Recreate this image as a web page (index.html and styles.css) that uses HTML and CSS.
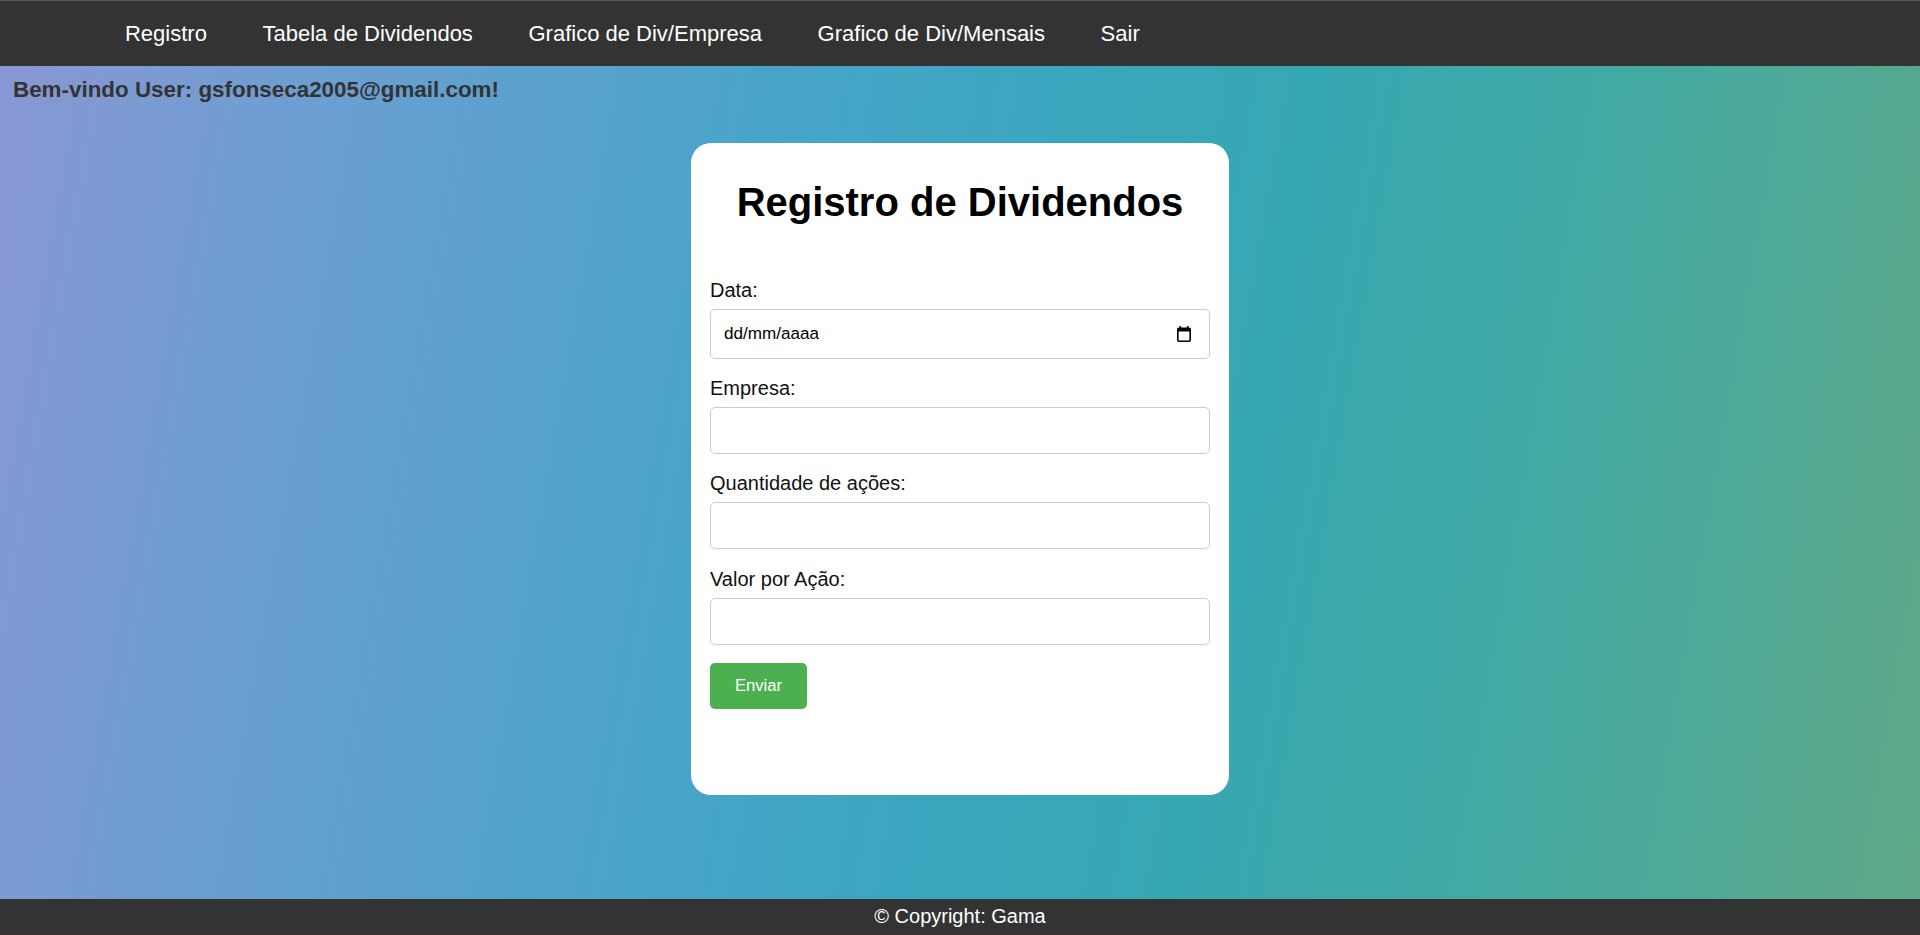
FILE: index.html
```html
<!DOCTYPE html>
<html lang="pt">
<head>
<meta charset="utf-8">
<title>Registro de Dividendos</title>
<link rel="stylesheet" href="styles.css">
</head>
<body>
<nav class="topnav">
  <a href="#" class="nav-link">Registro</a>
  <a href="#" class="nav-link">Tabela de Dividendos</a>
  <a href="#" class="nav-link">Grafico de Div/Empresa</a>
  <a href="#" class="nav-link">Grafico de Div/Mensais</a>
  <a href="#" class="nav-link">Sair</a>
</nav>
<main class="main">
  <p class="welcome">Bem-vindo User: gsfonseca2005@gmail.com!</p>
  <section class="card">
    <h1 class="card-title">Registro de Dividendos</h1>
    <form class="form">
      <div class="field">
        <label class="label">Data:</label>
        <div class="date-box">
          <input class="date-text" type="text" placeholder="dd/mm/aaaa">
          <svg class="cal-icon" width="14" height="16" viewBox="0 0 14 16">
            <rect x="2.5" y="0" width="1.6" height="3" fill="#000"/>
            <rect x="9.9" y="0" width="1.6" height="3" fill="#000"/>
            <rect x="0.8" y="2.3" width="12.4" height="12.9" rx="1.2" fill="none" stroke="#000" stroke-width="1.6"/>
            <rect x="0.8" y="2.3" width="12.4" height="3.2" fill="#000"/>
          </svg>
        </div>
      </div>
      <div class="field">
        <label class="label">Empresa:</label>
        <input class="input" type="text">
      </div>
      <div class="field">
        <label class="label">Quantidade de ações:</label>
        <input class="input" type="text">
      </div>
      <div class="field">
        <label class="label">Valor por Ação:</label>
        <input class="input" type="text">
      </div>
      <button class="btn" type="button">Enviar</button>
    </form>
  </section>
</main>
<footer class="footer">© Copyright: Gama</footer>
</body>
</html>
```
FILE: styles.css
```css
* { box-sizing: border-box; }

html, body {
  margin: 0;
  padding: 0;
  height: 100%;
}

body {
  display: flex;
  flex-direction: column;
  height: 935px;
  font-family: "Liberation Sans", Arial, sans-serif;
  background: linear-gradient(100deg, #8a97d4 0%, #6a9fd1 17%, #48a4c9 38%, #3aa6be 52%, #36a8b2 64%, #44a9a1 80%, #5fa886 100%);
}

.topnav {
  display: flex;
  align-items: center;
  height: 66px;
  padding-left: 97.2px;
  background: #333;
  border-top: 1px solid #5a5a5a;
}

.nav-link {
  color: #fff;
  text-decoration: none;
  font-size: 22px;
  padding: 0 27.8px;
}

.main {
  flex: 1;
  display: flex;
  flex-direction: column;
}

.welcome {
  margin: 0;
  padding: 10.5px 0 0 13px;
  font-size: 22.4px;
  line-height: 25px;
  font-weight: bold;
  color: #333;
}

.card {
  align-self: center;
  width: 538px;
  margin-top: 41.5px;
  padding: 0 19px 86px;
  background: #fff;
  border-radius: 20px;
}

.card-title {
  margin: 36px 0 53.5px;
  font-size: 40px;
  line-height: 46px;
  font-weight: bold;
  text-align: center;
  color: #000;
}

.form {
  display: flex;
  flex-direction: column;
}

.field {
  display: flex;
  flex-direction: column;
  margin-bottom: 18.2px;
}

.label {
  font-size: 20px;
  line-height: 23px;
  margin-bottom: 7px;
  color: #111;
}

.input {
  width: 100%;
  height: 47px;
  padding: 0 12px;
  font-family: "Liberation Sans", Arial, sans-serif;
  font-size: 16.67px;
  border: 1px solid #ccc;
  border-radius: 5px;
  background: #fff;
}

.date-box {
  display: flex;
  align-items: center;
  height: 50.5px;
  padding: 0 18px 0 13px;
  border: 1px solid #ccc;
  border-radius: 5px;
  background: #fff;
}

.date-text {
  flex: 1;
  border: none;
  outline: none;
  padding: 0;
  font-family: "Liberation Sans", Arial, sans-serif;
  font-size: 17.1px;
  color: #000;
  background: transparent;
}

.date-text::placeholder {
  color: #000;
  opacity: 1;
}

.cal-icon {
  flex: none;
  margin-top: 1px;
}

.btn {
  align-self: flex-start;
  width: 97px;
  height: 45.5px;
  padding: 0;
  font-family: "Liberation Sans", Arial, sans-serif;
  font-size: 16.67px;
  color: #fff;
  background: #4caf50;
  border: none;
  border-radius: 5px;
  margin-top: 0.5px;
}

.footer {
  height: 36px;
  line-height: 35px;
  text-align: center;
  font-size: 20px;
  color: #fff;
  background: #333;
  border-bottom: 1px solid #3e3029;
}
```
